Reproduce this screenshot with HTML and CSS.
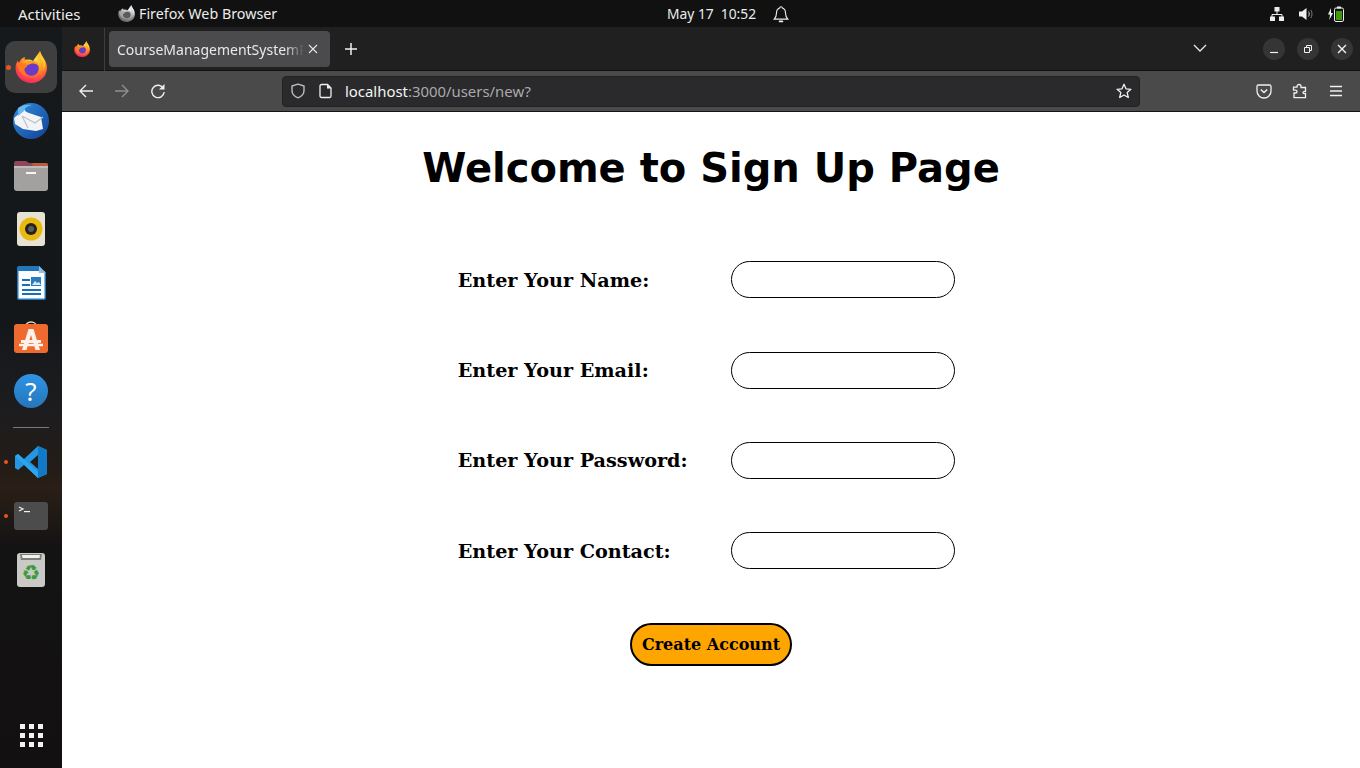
FILE: index.html
```html
<!DOCTYPE html>
<html lang="en">
<head>
<meta charset="utf-8">
<title>Sign Up</title>
<link rel="stylesheet" href="styles.css">
</head>
<body>
<svg class="defs" width="0" height="0" aria-hidden="true">
  <defs>
    <radialGradient id="fxBody" cx="0.6" cy="0.25" r="0.9">
      <stop offset="0" stop-color="#ffe14a"/>
      <stop offset="0.4" stop-color="#ff9a1f"/>
      <stop offset="0.75" stop-color="#ff3b4f"/>
      <stop offset="1" stop-color="#e31587"/>
    </radialGradient>
    <symbol id="firefox" viewBox="0 0 32 32">
      <path d="M25 0c.6 2.600 1.400 4 3.200 6.400C31 10 32 13.500 32 17c0 8.300-7 15-15.500 15C7.500 32 .5 25.500.5 17 .5 14 1.300 11.500 2.800 9.400c.2 1 .6 1.800 1.300 2.400C5 9 7.500 6.500 10 6c-.5 1.200-.5 2 0 2.800 3-.6 5.700-.3 8 1.200 2-3 4-5.500 7-10z" fill="url(#fxBody)"/>
      <path d="M25 0c-.8 4-.4 7 2 10 2 2.600 2.400 7 .4 10.500C30 17 31 13 29 8.500 28 5.600 25.800 3.800 25 0z" fill="#ffcf2e"/>
      <circle cx="16.500" cy="17.500" r="7.300" fill="#6b3bc8"/>
      <path d="M9 16.500C9.500 12 13.500 9.400 18 10c3.300.4 6 3 6.300 6-2-3-5.300-4-8.300-3.200-3 .8-4.600 2.200-7 3.700z" fill="#ff9c24"/>
      <path d="M2 13c3-1.500 6-1.500 9 0 1 .5 1.500 1.500 1 2.500l-3 2.500c-.5 3.500 2 6.500 6 7-6 .5-10-3-11-7-.6-2-1.500-3.500-2-5z" fill="#ff7a1c"/>
    </symbol>
    <symbol id="shield" viewBox="0 0 16 16">
      <path d="M8 1.200 14 3v4.500c0 3.600-2.600 6-6 7.300-3.400-1.300-6-3.700-6-7.300V3z" fill="none" stroke="currentColor" stroke-width="1.400" stroke-linejoin="round"/>
    </symbol>
  </defs>
</svg>

<div class="screen">
  <header class="topbar">
    <span class="activities">Activities</span>
    <span class="appmenu">
      <svg class="gray-icon" width="17" height="17"><use href="#firefox"/></svg>
      <span>Firefox Web Browser</span>
    </span>
    <span class="clock">
      <span>May 17&nbsp;&nbsp;10:52</span>
      <svg class="bell" width="18" height="18" viewBox="0 0 16 16"><path d="M8 1.500c.8 0 1.200.5 1.200 1.100C11.200 3.300 12 5 12 7c0 3 .7 4 2 5.500H2C3.300 11 4 10 4 7c0-2 .8-3.700 2.800-4.400C6.800 2 7.200 1.500 8 1.500z" fill="none" stroke="#eee" stroke-width="1"/><rect x="6" y="13.800" width="4" height="1.600" rx=".8" fill="#eee"/></svg>
    </span>
    <span class="tray">
      <svg width="16" height="16" viewBox="0 0 16 16"><path d="M8 5v3.500M3 11V8.500h10V11" fill="none" stroke="#eee"/><rect x="5.500" y="1" width="5" height="4.500" fill="#eee"/><rect x="1" y="10.500" width="5" height="4.500" fill="#eee"/><rect x="10" y="10.500" width="5" height="4.500" fill="#eee"/></svg>
      <svg width="16" height="16" viewBox="0 0 16 16"><path d="M1 5.500h3L8.500 2v12L4 10.500H1z" fill="#eee"/><path d="M10.500 5.500c1 1.500 1 3.500 0 5" fill="none" stroke="#ccc"/><path d="M12.800 3.800c1.600 2.600 1.600 5.800 0 8.400" fill="none" stroke="#777"/></svg>
      <svg class="battery" width="18" height="16" viewBox="0 0 18 16"><path d="M4 2 1 8.500h2L2.300 14 6 7H4z" fill="#eee"/><rect x="7.500" y="2" width="9" height="13.500" rx="1.500" fill="none" stroke="#eee"/><rect x="10" y=".5" width="4" height="2" fill="#eee"/><rect x="9" y="5" width="6" height="9" fill="#3f9a0a"/></svg>
    </span>
  </header>

  <div class="desktop">
    <nav class="dock">
      <div class="dock-item dock-active running">
        <svg width="32" height="32"><use href="#firefox"/></svg>
      </div>
      <div class="dock-item">
        <svg width="36" height="36" viewBox="0 0 36 36"><defs><linearGradient id="tb" x1="0" y1="0" x2="1" y2="1"><stop offset="0" stop-color="#2f8fe0"/><stop offset="1" stop-color="#123f94"/></linearGradient></defs><circle cx="18" cy="18" r="18" fill="url(#tb)"/><path d="M1 15 7 10 11 6c1 2 2 3 5 4l12 4 2 12-7 2-13-2-8-5z" fill="#f4f4f6"/><path d="M9 13l13 7 8-6M9 13l6 12" fill="none" stroke="#b9c2d0" stroke-width="1.200"/><path d="M5 5c4-3 9-4 14-3-5 1-7 3-8 6l-6 5z" fill="#68b8f0"/></svg>
      </div>
      <div class="dock-item">
        <svg width="34" height="31" viewBox="0 0 34 31"><path d="M0 3a2 2 0 0 1 2-2h10l3 2h17a2 2 0 0 1 2 2v6H0z" fill="#8e4658"/><path d="M18 3h14a2 2 0 0 1 2 2v6H20z" fill="#b85c3c"/><rect y="6" width="34" height="25" rx="3" fill="#a3a1a0"/><rect y="6" width="34" height="2" fill="#bdbbb9"/><rect x="12" y="12" width="10" height="2" fill="#f4f4f4"/></svg>
      </div>
      <div class="dock-item">
        <svg width="28" height="34" viewBox="0 0 28 34"><rect width="28" height="34" rx="3" fill="#e8e2d2"/><circle cx="14" cy="17" r="11.500" fill="#e9b90f"/><circle cx="14" cy="17" r="6" fill="#23221f"/><circle cx="14" cy="17" r="3" fill="#5c5a52"/></svg>
      </div>
      <div class="dock-item">
        <svg width="29" height="34" viewBox="0 0 29 34"><path d="M2 0h20l7 7v25a2 2 0 0 1-2 2H2a2 2 0 0 1-2-2V2a2 2 0 0 1 2-2z" fill="#1f78bd"/><rect x="1.500" y="5" width="26" height="27.500" fill="#fbfdff"/><path d="M22 0l7 7h-7z" fill="#8fbfe0"/><g fill="#1a6eb4"><rect x="5" y="13" width="8" height="2"/><rect x="5" y="18" width="8" height="2"/><rect x="5" y="23" width="19" height="2"/><rect x="5" y="27" width="19" height="2"/></g><rect x="14" y="11" width="10" height="9" fill="#2a7cc0"/><path d="M15 19l3-4 2 2 2-1 2 3z" fill="#d7e8f5"/></svg>
      </div>
      <div class="dock-item">
        <svg width="34" height="32" viewBox="0 0 34 32"><path d="M11 7c0-8 12-8 12 0" fill="none" stroke="#f0d7b0" stroke-width="1.400"/><rect y="3" width="34" height="29" rx="3" fill="#ef6a2e"/><path d="M7 20.500h20" stroke="#f9f1ea" stroke-width="3"/><path d="M5 24h24" stroke="#f9f1ea" stroke-width="2.500"/><path d="M14.500 8h5L26 29h-4.500L17 14 12.500 29H8z" fill="#f9f1ea"/></svg>
      </div>
      <div class="dock-item">
        <span class="help">?</span>
      </div>
      <div class="dock-sep"></div>
      <div class="dock-item dock-code running">
        <svg width="32" height="32" viewBox="0 0 32 32"><path d="M23 0l9 4v24l-9 4-14-13-6 5-3-2v-12l3-2 6 5zM23 9l-8 7 8 7z" fill="#2496e2"/><path d="M23 0l9 4v24l-9 4z" fill="#1279c6"/><path d="M0 10l3-2 20 18v6z" fill="#2ba5ee"/></svg>
      </div>
      <div class="dock-item running">
        <svg width="34" height="28" viewBox="0 0 34 28"><rect width="34" height="28" rx="3" fill="#4c4c4c"/><path d="M5 5l4 2-4 2" fill="none" stroke="#f2f2f2" stroke-width="1.200"/><rect x="10" y="9" width="6" height="1.200" fill="#f2f2f2"/></svg>
      </div>
      <div class="dock-item">
        <svg class="trash" width="28" height="34" viewBox="0 0 28 34"><rect y="0" width="28" height="34" rx="3" fill="#c9c9c6"/><path d="M3 1h22l-1 6H4z" fill="#7d7d7a"/><path d="M5 2h18l-.5 3h-17z" fill="#f1f1ef"/><text class="recycle" x="14" y="27" text-anchor="middle">♻</text></svg>
      </div>
      <div class="apps-grid">
        <i></i><i></i><i></i><i></i><i></i><i></i><i></i><i></i><i></i>
      </div>
    </nav>

    <main class="browser">
      <div class="tabbar">
        <div class="tab-fx">
          <svg width="16" height="16"><use href="#firefox"/></svg>
        </div>
        <div class="tab">
          <span class="tab-title">CourseManagementSystemR</span>
          <svg class="tab-close" width="10" height="10" viewBox="0 0 10 10"><path d="M1 1l8 8M9 1 1 9" stroke="#e6e6e6" stroke-width="1.100"/></svg>
        </div>
        <svg class="newtab" width="12" height="12" viewBox="0 0 12 12"><path d="M6 0v12M0 6h12" stroke="#f0f0f0" stroke-width="1.500"/></svg>
        <svg class="tabs-menu" width="14" height="8" viewBox="0 0 14 8"><path d="M1 1l6 6 6-6" fill="none" stroke="#e8e8e8" stroke-width="1.300"/></svg>
        <div class="winbtns">
          <span class="winbtn"><svg width="10" height="10" viewBox="0 0 10 10"><path d="M1 8.500h8" stroke="#f0f0f0" stroke-width="1.200"/></svg></span>
          <span class="winbtn"><svg width="10" height="10" viewBox="0 0 10 10"><path d="M1.500 3.500h5v5h-5zM3.500 3.500v-2h5v5h-2" fill="none" stroke="#f0f0f0"/></svg></span>
          <span class="winbtn"><svg width="10" height="10" viewBox="0 0 10 10"><path d="M1 1l8 8M9 1 1 9" stroke="#f0f0f0" stroke-width="1.400"/></svg></span>
        </div>
      </div>

      <div class="toolbar">
        <div class="navbtns">
          <svg width="16" height="16" viewBox="0 0 16 16"><path d="M15 8H2M8 2 2 8l6 6" fill="none" stroke="#f0f0f0" stroke-width="1.400"/></svg>
          <svg class="nav-off" width="16" height="16" viewBox="0 0 16 16"><path d="M1 8h13M8 2l6 6-6 6" fill="none" stroke="#8f8f8f" stroke-width="1.400"/></svg>
          <svg width="16" height="16" viewBox="0 0 16 16"><path d="M13.500 5.500A6.200 6.200 0 1 0 14.200 9" fill="none" stroke="#f0f0f0" stroke-width="1.400"/><path d="M14.500 1v5.500H9z" fill="#f0f0f0"/></svg>
        </div>
        <div class="urlbar">
          <svg class="url-shield" width="16" height="16"><use href="#shield"/></svg>
          <svg class="url-page" width="14" height="16" viewBox="0 0 14 16"><path d="M2.500 1.500h6l3.500 3.500v8a1.500 1.500 0 0 1-1.500 1.500h-8A1.500 1.500 0 0 1 1 13V3a1.500 1.500 0 0 1 1.500-1.500z" fill="none" stroke="#f0f0f0" stroke-width="1.300"/><path d="M8 1.500V5.500h4z" fill="#f0f0f0"/></svg>
          <span class="url-text"><span class="url-host">localhost</span>:3000/users/new?</span>
          <svg class="url-star" width="16" height="16" viewBox="0 0 16 16"><path d="M8 1.300l2 4.500 4.900.5-3.700 3.300 1.100 4.900L8 12l-4.300 2.500 1.100-4.900L1.100 6.300 6 5.800z" fill="none" stroke="#f0f0f0" stroke-width="1.300" stroke-linejoin="round"/></svg>
        </div>
        <div class="toolicons">
          <svg width="16" height="16" viewBox="0 0 16 16"><path d="M2.500 2h11A1.500 1.500 0 0 1 15 3.500V8a7 7 0 0 1-14 0V3.500A1.500 1.500 0 0 1 2.500 2z" fill="none" stroke="#f0f0f0" stroke-width="1.300"/><path d="M4.800 6.500 8 9.500l3.200-3" fill="none" stroke="#f0f0f0" stroke-width="1.500"/></svg>
          <svg width="16" height="16" viewBox="0 0 16 16"><path d="M7 1.500c1.300 0 2 .9 2 2V4.500h4.500v4H12.700v-.1c-1 0-1.700 0-1.700 1s.7 1.200 1.700 1.200h.8v4h-11.500v-4.600h1.500c1 0 1.500-.4 1.500-1.400 0-.9-.7-1.400-1.500-1.400H1.500v-3h3.500V3.500c0-1.100.7-2 2-2z" fill="none" stroke="#f0f0f0" stroke-width="1.300"/></svg>
          <svg width="16" height="16" viewBox="0 0 16 16"><path d="M2 3.500h12M2 8h12M2 12.500h12" stroke="#f0f0f0" stroke-width="1.300"/></svg>
        </div>
      </div>

      <div class="page">
        <h1 class="title">Welcome to Sign Up Page</h1>
        <form class="signup">
          <div class="field"><label class="label">Enter Your Name:</label><span class="input"></span></div>
          <div class="field"><label class="label">Enter Your Email:</label><span class="input"></span></div>
          <div class="field"><label class="label">Enter Your Password:</label><span class="input"></span></div>
          <div class="field"><label class="label">Enter Your Contact:</label><span class="input"></span></div>
          <div class="actions"><span class="submit">Create Account</span></div>
        </form>
      </div>
    </main>
  </div>
</div>
</body>
</html>
```
FILE: styles.css
```css
* { box-sizing: border-box; }
html, body { margin: 0; height: 100%; overflow: hidden; }
body { font-family: "Noto Sans", sans-serif; background: #fff; }
.defs { position: absolute; }
svg { display: block; flex: none; }

.screen { width: 1360px; height: 768px; display: flex; flex-direction: column; }

/* top bar */
.topbar {
  height: 27px; flex: none; background: #111; color: #ececec;
  display: flex; align-items: center; position: relative;
  font-size: 14.300px; padding-left: 18px;
}
.activities { width: 100px; font-size: 15px; }
.appmenu { display: flex; align-items: center; gap: 4px; }
.gray-icon { filter: grayscale(1) brightness(1.15); }
.clock {
  position: absolute; left: 667px; top: 0; height: 27px;
  display: flex; align-items: center; gap: 16px; font-size: 13.800px; white-space: nowrap;
}
.tray { margin-left: auto; margin-right: 15px; display: flex; align-items: center; gap: 13px; }

/* dock */
.desktop { flex: 1; display: flex; min-height: 0; }
.dock {
  width: 62px; flex: none; display: flex; flex-direction: column; align-items: center;
  padding-top: 13px; position: relative;
  background: linear-gradient(180deg, #15191c 0%, #14171a 40%, #1d1d1f 52%, #241c17 60%, #2a1f17 62%, #141313 70%, #121010 100%);
}
.dock-item { width: 52px; height: 54px; flex: none; display: flex; align-items: center; justify-content: center; position: relative; }
.dock-active { height: 52px; margin: 1px 0; background: #3f3f3f; border-radius: 10px; }
.running::before {
  content: ""; position: absolute; left: -1px; top: 50%; width: 4px; height: 4px; margin-top: -2px;
  border-radius: 50%; background: #e95420;
}
.dock-active.running::before { left: 1px; width: 5px; height: 5px; }
.dock-sep { width: 36px; height: 1px; background: #77797b; margin: 9px 0 7px; flex: none; }
.help {
  width: 34px; height: 34px; border-radius: 50%; flex: none;
  background: linear-gradient(180deg, #2f94e4, #2576ba);
  color: #fff; font-size: 26px; line-height: 34px; text-align: center;
}
.recycle { font: 21px "DejaVu Sans", sans-serif; fill: #3b9a3b; }
.apps-grid {
  position: absolute; left: 20px; bottom: 21px;
  display: grid; grid-template-columns: repeat(3, 5px); gap: 4px;
}
.apps-grid i { width: 5px; height: 5px; background: #f2f2f2; display: block; }

/* browser */
.browser { flex: 1; min-width: 0; display: flex; flex-direction: column; background: #fff; }
.tabbar {
  height: 44px; flex: none; background: #202020; display: flex; align-items: center;
  position: relative; border-bottom: 1px solid #111; padding-top: 1px;
}
.tab-fx { width: 43px; height: 43px; border-right: 1px solid #3d3d3d; display: flex; align-items: center; padding-left: 12px; }
.tab {
  margin-left: 4px; width: 221px; height: 36px; background: #4b4b4d; border-radius: 4px;
  display: flex; align-items: center; padding: 1px 0 0 8px; position: relative;
  color: #e8e8e8; font-size: 14px;
}
.tab-title {
  white-space: nowrap;
  -webkit-mask-image: linear-gradient(90deg, #000 88%, transparent 98%);
  mask-image: linear-gradient(90deg, #000 88%, transparent 98%);
}
.tab-close { position: absolute; left: 199px; top: 13px; }
.newtab { margin-left: 15px; }
.tabs-menu { margin-left: auto; margin-bottom: 2px; }
.winbtns { display: flex; gap: 12px; margin-left: 56px; margin-right: 7px; }
.winbtn { width: 22px; height: 22px; border-radius: 50%; background: #353535; display: flex; align-items: center; justify-content: center; }

.toolbar {
  height: 41px; flex: none; background: #4a4a4a; border-bottom: 1px solid #141414;
  display: flex; align-items: center;
}
.navbtns { width: 220px; padding-left: 16px; display: flex; align-items: center; gap: 20px; flex: none; }
.urlbar {
  width: 858px; height: 31px; background: #2a2a2c; border-radius: 4px; border: 1px solid #222;
  display: flex; align-items: center; padding-left: 7px; flex: none;
  font-size: 14.900px; color: #bdbdbd;
}
.url-page { margin-left: 13px; }
.url-text { margin-left: 12px; white-space: nowrap; color: #a9a9ab; }
.url-host { color: #f4f4f4; }
.url-star { margin-left: auto; margin-right: 7px; }
.toolicons { display: flex; align-items: center; gap: 20px; margin-left: 116px; }

/* page */
.page { flex: 1; min-height: 0; display: flex; flex-direction: column; }
.title {
  margin: 30px 0 0; height: 52px; text-align: center; color: #000;
  font: bold 40px/52px "DejaVu Sans", sans-serif;
}
.signup { margin: 40.600px 0 0 395.700px; font-family: "DejaVu Serif", serif; color: #000; }
.field { display: flex; align-items: center; height: 90.330px; }
.label { width: 273.300px; padding-top: 1px; font: bold 19.200px "DejaVu Serif", serif; white-space: nowrap; }
.input { width: 224px; height: 37px; border: 1px solid #000; border-radius: 19px; background: #fff; }
.actions { width: 497px; display: flex; justify-content: center; padding-left: 9.600px; margin-top: 27.400px; }
.submit {
  display: block; padding: 0 10px; height: 43px; background: #ffa500;
  border: 2px solid #000; border-radius: 22px; font: bold 16px/40px "DejaVu Serif", serif; white-space: nowrap;
}
```
